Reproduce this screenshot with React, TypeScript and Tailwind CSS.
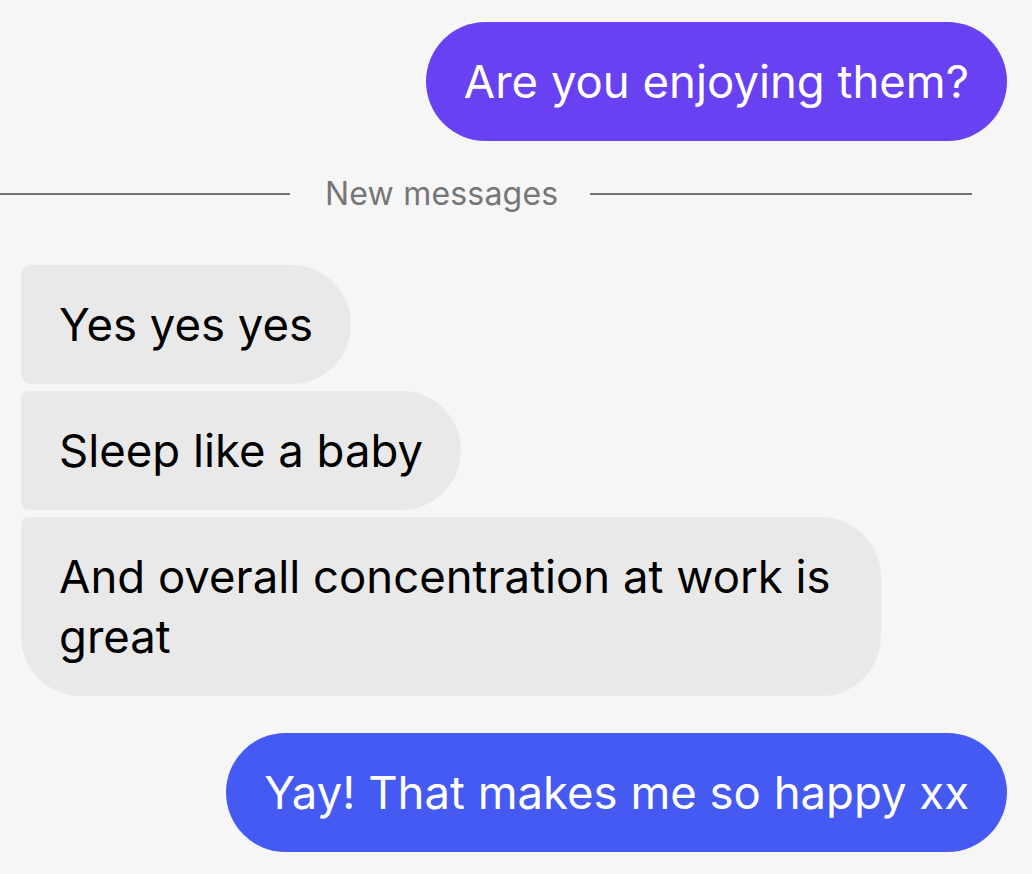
import React from "react";

function Outgoing({ text, color }: { text: string; color: string }) {
  return (
    <div className="flex justify-end pr-[25px]">
      <div
        className={`rounded-full px-[38px] py-[29.5px] text-[45.5px] leading-[60px] text-white ${color}`}
      >
        {text}
      </div>
    </div>
  );
}

export default function App() {
  return (
    <div
      className="min-h-[874px] w-full bg-[#f6f6f6] text-black"
      style={{ fontFamily: "Inter, 'Noto Sans', sans-serif" }}
    >
      <div className="flex flex-col pt-[22px]">
        <Outgoing text="Are you enjoying them?" color="bg-[#6741f2]" />

        <div className="mt-[33px] flex h-[40px] items-center pr-[60px]">
          <div className="h-[2px] w-[290px] bg-[#737373]" />
          <span className="pl-[35px] pr-[32px] text-[32px] tracking-[0.2px] text-[#767676]">New messages</span>
          <div className="h-[2px] flex-1 bg-[#737373]" />
        </div>

        <div className="mt-[51px] flex flex-col items-start gap-[7px] pl-[21px]">
          <div className="rounded-l-[10px] rounded-r-[60px] bg-[#e9e9e9] px-[38px] py-[29.5px] text-[45.5px] leading-[60px]">
            Yes yes yes
          </div>
          <div className="rounded-l-[8px] rounded-r-[60px] bg-[#e9e9e9] px-[38px] py-[29.5px] text-[45.5px] leading-[60px]">
            Sleep like a baby
          </div>
          <div className="w-[860px] rounded-tl-[8px] rounded-tr-[60px] rounded-br-[60px] rounded-bl-[60px] bg-[#e9e9e9] px-[38px] py-[29.5px] text-[45.5px] leading-[60px]">
            And overall concentration at work is
            <br />
            great
          </div>
        </div>

        <div className="mt-[37px]">
          <Outgoing text="Yay! That makes me so happy xx" color="bg-[#455af2]" />
        </div>
      </div>
    </div>
  );
}
